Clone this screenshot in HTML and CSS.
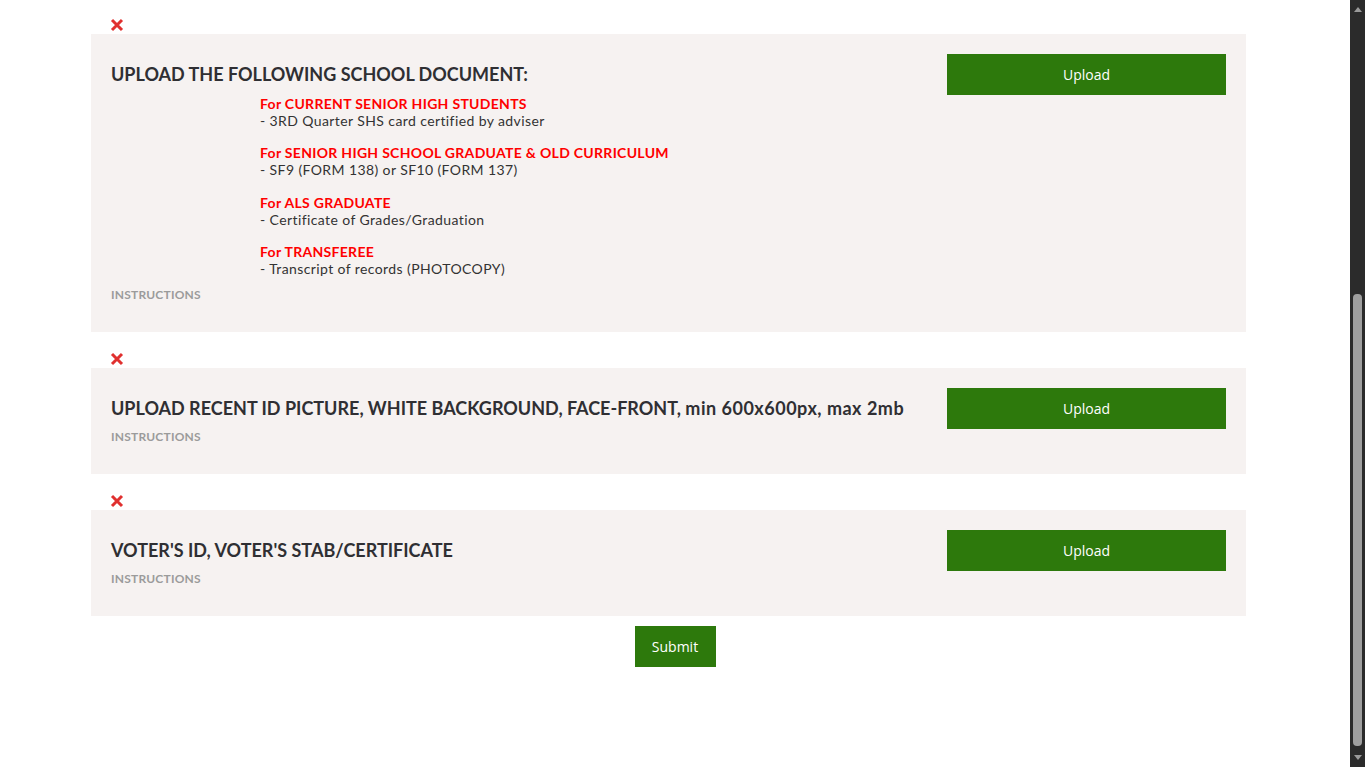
FILE: index.html
```html
<!DOCTYPE html>
<html>
<head>
<meta charset="utf-8">
<link rel="stylesheet" href="styles.css">
</head>
<body>
<div class="page">
  <main class="main">
    <div class="form">
      <div class="item">
        <div class="remove"><svg width="14" height="14" viewBox="0 0 14 14"><path d="M2 2 L12 12 M12 2 L2 12" stroke="#e0302f" stroke-width="3" stroke-linecap="butt"/></svg></div>
        <section class="card">
          <div class="card-left">
            <h2 class="title">UPLOAD THE FOLLOWING SCHOOL DOCUMENT:</h2>
            <div class="docs">
              <div class="doc"><div class="doc-head">For CURRENT SENIOR HIGH STUDENTS</div><div class="doc-line">- 3RD Quarter SHS card certified by adviser</div></div>
              <div class="doc"><div class="doc-head">For SENIOR HIGH SCHOOL GRADUATE &amp; OLD CURRICULUM</div><div class="doc-line">- SF9 (FORM 138) or SF10 (FORM 137)</div></div>
              <div class="doc"><div class="doc-head">For ALS GRADUATE</div><div class="doc-line">- Certificate of Grades/Graduation</div></div>
              <div class="doc"><div class="doc-head">For TRANSFEREE</div><div class="doc-line">- Transcript of records (PHOTOCOPY)</div></div>
            </div>
            <div class="instr">INSTRUCTIONS</div>
          </div>
          <button class="upload">Upload</button>
        </section>
      </div>
      <div class="item">
        <div class="remove"><svg width="14" height="14" viewBox="0 0 14 14"><path d="M2 2 L12 12 M12 2 L2 12" stroke="#e0302f" stroke-width="3" stroke-linecap="butt"/></svg></div>
        <section class="card">
          <div class="card-left">
            <h2 class="title">UPLOAD RECENT ID PICTURE, WHITE BACKGROUND, FACE-FRONT, <span class="lower">min 600x600px, max 2mb</span></h2>
            <div class="instr">INSTRUCTIONS</div>
          </div>
          <button class="upload">Upload</button>
        </section>
      </div>
      <div class="item">
        <div class="remove"><svg width="14" height="14" viewBox="0 0 14 14"><path d="M2 2 L12 12 M12 2 L2 12" stroke="#e0302f" stroke-width="3" stroke-linecap="butt"/></svg></div>
        <section class="card">
          <div class="card-left">
            <h2 class="title">VOTER'S ID, VOTER'S STAB/CERTIFICATE</h2>
            <div class="instr">INSTRUCTIONS</div>
          </div>
          <button class="upload">Upload</button>
        </section>
      </div>
    </div>
    <div class="actions"><button class="submit">Submit</button></div>
  </main>
  <aside class="scrollbar">
    <div class="arrow up"></div>
    <div class="track"><div class="thumb"></div></div>
    <div class="arrow down"></div>
  </aside>
</div>
</body>
</html>
```
FILE: styles.css
```css
* { box-sizing: border-box; }
html, body { margin: 0; padding: 0; background: #fff; }
body { font-family: "Lato", "Open Sans", sans-serif; color: #333; overflow: hidden; }
.page { display: flex; width: 1365px; height: 767px; }
.main { flex: 1; height: 767px; overflow: hidden; }
.form { width: 1155px; margin-left: 91px; margin-top: -2px; }
.remove { height: 36px; padding: 20px 0 0 19px; line-height: 0; }
.card { background: #f6f2f1; display: flex; align-items: flex-start; padding: 20px 20px 29px 20px; }
.card-left { flex: 1; }
.title { margin: 0; font-size: 18px; font-weight: 700; line-height: 41px; color: #2f2f33; letter-spacing: 0; }
.title .lower { letter-spacing: 0.5px; }
.docs { padding-left: 149px; margin-bottom: 10px; }
.doc { margin-bottom: 15px; }
.doc:nth-child(2) { margin-bottom: 16px; }
.doc:last-child { margin-bottom: 0; }
.doc-head { color: #ff0000; font-weight: 700; font-size: 14px; line-height: 17px; letter-spacing: 0.3px; }
.doc-line { font-size: 14px; line-height: 17px; color: #333; letter-spacing: 0.4px; }
.instr { font-size: 12px; line-height: 16px; font-weight: 700; color: #9b9b9b; letter-spacing: 0.2px; }
.upload { width: 279px; height: 41px; background: #2d790c; color: #fff; border: 0; margin-left: 21px; font-family: "Open Sans", sans-serif; font-size: 14px; }
.actions { display: flex; justify-content: center; padding-top: 10px; }
.submit { width: 81px; height: 41px; background: #2d790c; color: #fff; border: 0; font-family: "Open Sans", sans-serif; font-size: 14px; }
.scrollbar { width: 15px; background: #2b2b2b; display: flex; flex-direction: column; align-items: center; }
.arrow { width: 0; height: 0; border-left: 4px solid transparent; border-right: 4px solid transparent; margin: 7px 0; }
.arrow.up { border-bottom: 5px solid #9a9a9a; }
.arrow.down { border-top: 5px solid #9a9a9a; }
.track { flex: 1; width: 100%; display: flex; flex-direction: column; justify-content: flex-end; padding: 0 3px 2px; }
.thumb { height: 452px; background: #9f9f9f; border-radius: 4px; }
```
